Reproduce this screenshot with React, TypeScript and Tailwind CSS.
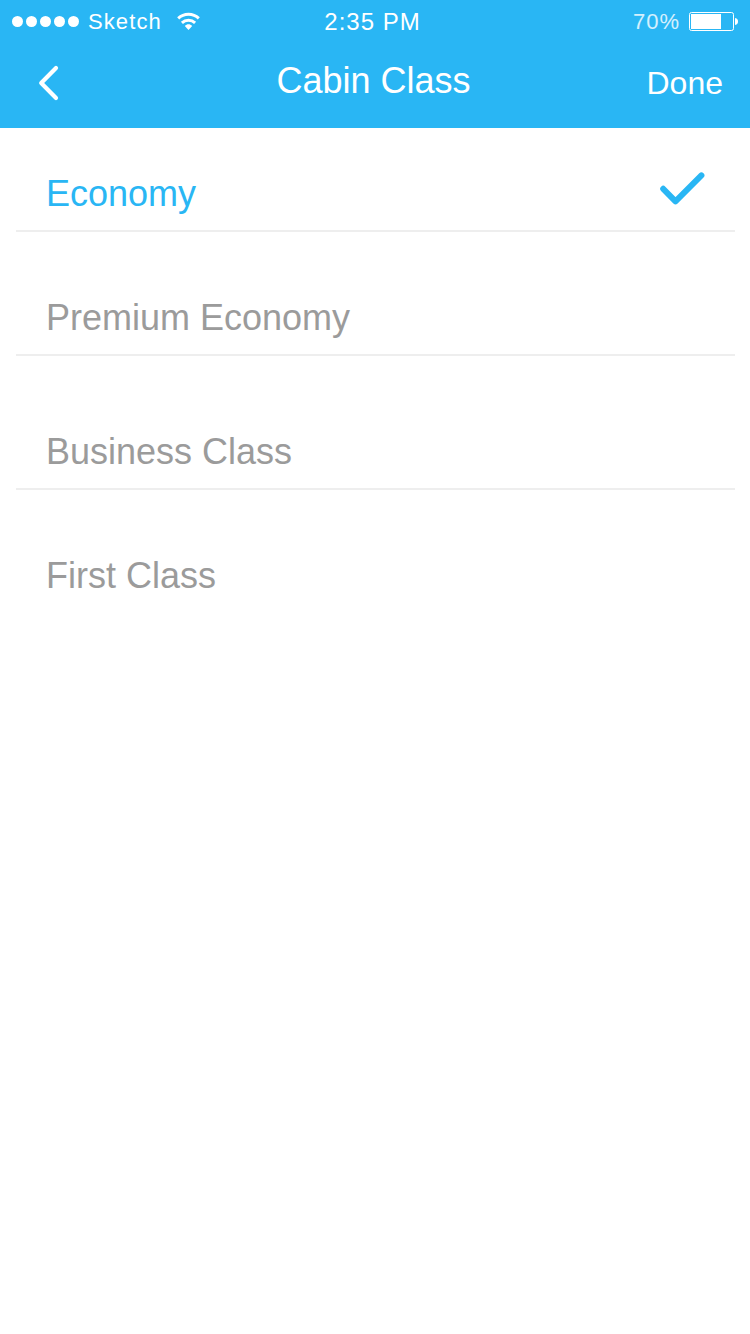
import React, { useState } from 'react';

interface CabinOption {
  id: string;
  label: string;
  rowClass: string;
}

const CABIN_OPTIONS: CabinOption[] = [
  { id: 'economy', label: 'Economy', rowClass: 'h-[104px] border-b-2' },
  { id: 'premium', label: 'Premium Economy', rowClass: 'h-[124px] border-b-2' },
  { id: 'business', label: 'Business Class', rowClass: 'h-[134px] border-b-2' },
  { id: 'first', label: 'First Class', rowClass: 'h-[122px]' },
];

const WifiIcon = () => (
  <svg width="24" height="20" viewBox="0 0 24 20" fill="none" stroke="white" strokeWidth="3">
    <path d="M1.2 6.3C7 0.8 16 0.8 21.8 6.3" />
    <path d="M4.9 10.8C8.6 7.4 14.4 7.4 18.1 10.8" />
    <path d="M11.5 18L7.8 14C9.9 11.8 13.1 11.8 15.2 14Z" fill="white" stroke="none" />
  </svg>
);

const BatteryIcon = () => (
  <svg width="50" height="20" viewBox="0 0 50 20" fill="none">
    <rect x="0.5" y="0.5" width="44" height="18" rx="2" stroke="white" />
    <rect x="2" y="2" width="30" height="15" fill="white" />
    <path d="M46 6C48.4 6.4 49 7.6 49 9.5S48.4 12.6 46 13Z" fill="white" />
  </svg>
);

const StatusBar = () => (
  <div className="grid h-11 grid-cols-3 items-center pl-3 pr-[11px]">
    <div className="flex items-center">
      <div className="mb-px flex gap-[3px]">
        {[0, 1, 2, 3, 4].map((dot) => (
          <span key={dot} className="h-[11px] w-[11px] rounded-full bg-white" />
        ))}
      </div>
      <span className="ml-[9px] mr-[15px] text-[22px] leading-6 tracking-[1.1px]">Sketch</span>
      <WifiIcon />
    </div>
    <span className="pr-1.5 text-center text-2xl leading-6 tracking-[1px]">2:35 PM</span>
    <div className="flex items-center justify-end gap-[9px]">
      <span className="text-[22px] leading-6 tracking-[1px] text-white/80">70%</span>
      <BatteryIcon />
    </div>
  </div>
);

const Header = () => (
  <header className="h-32 bg-[#29b6f4] text-white">
    <StatusBar />
    <div className="grid h-[78px] grid-cols-[1fr_auto_1fr] items-center pl-[38px] pr-[27px]">
      <button type="button" aria-label="Back" className="w-fit">
        <svg width="22" height="36" viewBox="0 0 22 36" fill="none" stroke="white" strokeWidth="4.2" strokeLinecap="round" strokeLinejoin="round">
          <path d="M18 3L3.2 18L18 33" />
        </svg>
      </button>
      <h1 className="mb-[5px] pr-3.5 text-4xl leading-10">Cabin Class</h1>
      <button type="button" className="justify-self-end text-[32px] leading-10">Done</button>
    </div>
  </header>
);

const App: React.FC = () => {
  const [selected, setSelected] = useState('economy');

  return (
    <div className="min-h-screen bg-white font-['Liberation_Sans',Arial,sans-serif]">
      <Header />
      <ul className="pl-4 pr-[15px]">
        {CABIN_OPTIONS.map(({ id, label, rowClass }) => (
          <li
            key={id}
            onClick={() => setSelected(id)}
            className={`flex cursor-pointer items-end justify-between border-[#eeeeee] pb-4 pl-[30px] pr-[30px] text-4xl leading-10 ${rowClass} ${
              selected === id ? 'text-[#29b6f4]' : 'text-[#9b9b9b]'
            }`}
          >
            <span>{label}</span>
            {selected === id && (
              <svg className="mb-[7px]" width="46" height="36" viewBox="0 0 46 36" fill="none" stroke="currentColor" strokeWidth="6" strokeLinecap="round" strokeLinejoin="round">
                <path d="M4.2 17.8L16.5 30.3L42.4 4.4" />
              </svg>
            )}
          </li>
        ))}
      </ul>
    </div>
  );
};

export default App;
